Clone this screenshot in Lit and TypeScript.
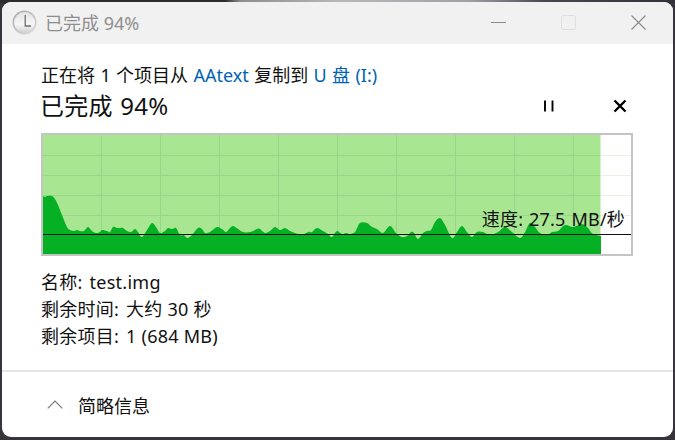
import { LitElement, html, css, svg } from 'lit';
import { customElement } from 'lit/decorators.js';

// speed curve, sampled from left to right in page coordinates
const SPEED: [number, number][] = [
  [43, 196], [45, 197], [47, 196], [52, 196], [55, 199], [58, 205], [62, 215], [67, 227], [70, 230], [74, 231],
  [77, 230], [80, 231], [84, 231], [88, 227], [92, 231], [96, 233], [100, 232], [102, 230], [107, 231], [110, 232],
  [113, 227], [117, 228], [120, 228], [123, 228], [127, 231], [131, 232], [135, 229], [138, 232], [142, 237], [147, 230],
  [152, 223], [156, 227], [160, 233], [165, 231], [168, 228], [172, 229], [176, 228], [180, 235], [184, 235], [187, 238],
  [192, 235], [198, 228], [202, 229], [205, 233], [210, 232], [217, 227], [222, 229], [226, 232], [229, 229], [233, 226],
  [238, 229], [243, 232], [250, 232], [257, 229], [260, 229], [265, 233], [270, 231], [275, 227], [280, 230], [285, 228],
  [290, 231], [295, 233], [302, 235], [308, 232], [312, 232], [317, 228], [323, 231], [328, 234], [332, 237], [337, 231],
  [342, 234], [346, 233], [350, 234], [355, 232], [360, 223], [367, 223], [372, 227], [377, 229], [383, 233], [390, 226],
  [396, 233], [402, 237], [407, 236], [411, 232], [414, 233], [418, 239], [423, 233], [427, 231], [431, 230], [435, 222],
  [440, 218], [445, 225], [452, 238], [457, 232], [462, 226], [467, 232], [472, 237], [477, 232], [483, 232], [490, 235],
  [498, 232], [505, 227], [512, 232], [520, 238], [525, 232], [530, 223], [535, 227], [540, 233], [547, 235], [552, 232],
  [558, 231], [565, 225], [573, 227], [582, 224], [588, 228], [593, 234], [601, 236],
];

const GRID_X = [101, 160, 219, 278, 337, 396, 455, 514, 573];
const GRID_Y = [155, 175, 195, 215];

// Catmull-Rom through the samples, so the peaks keep their height
function speedPath() {
  let d = `M43 255L${SPEED[0][0]} ${SPEED[0][1]}`;
  for (let i = 0; i < SPEED.length - 1; i++) {
    const p0 = SPEED[Math.max(i - 1, 0)];
    const p1 = SPEED[i];
    const p2 = SPEED[i + 1];
    const p3 = SPEED[Math.min(i + 2, SPEED.length - 1)];
    const c1x = p1[0] + (p2[0] - p0[0]) / 6;
    const c1y = p1[1] + (p2[1] - p0[1]) / 6;
    const c2x = p2[0] - (p3[0] - p1[0]) / 6;
    const c2y = p2[1] - (p3[1] - p1[1]) / 6;
    d += `C${c1x.toFixed(1)} ${c1y.toFixed(1)} ${c2x.toFixed(1)} ${c2y.toFixed(1)} ${p2[0]} ${p2[1]}`;
  }
  return `${d}L601 255Z`;
}

@customElement('app-root')
export class AppRoot extends LitElement {
  static styles = css`
    :host {
      display: block;
      width: 675px;
      height: 440px;
      padding: 2px 2px 3px 2px;
      box-sizing: border-box;
      overflow: hidden;
      background:
        linear-gradient(90deg, #2c2c2e 0, #2c2c2e 225px, #8f8b90 240px, #b9b6bb 340px, #a29ea6 470px, #4a4650 545px, #33303a 675px) top / 100% 3px no-repeat,
        #37343c;
      font-family: 'Noto Sans', 'Noto Sans CJK SC', sans-serif;
      color: #111;
    }

    .window {
      height: 100%;
      display: flex;
      flex-direction: column;
      background: #fff;
      border-radius: 9px;
      overflow: hidden;
    }

    .titlebar {
      height: 42px;
      flex-shrink: 0;
      display: flex;
      align-items: center;
      background: #f1f1f1;
      padding: 0 0 2px 10px;
      box-sizing: border-box;
      color: #8e8e8e;
      font-size: 18px;
    }

    .clock {
      width: 25px;
      height: 25px;
      margin-right: 8px;
    }

    .controls {
      margin-left: auto;
      display: flex;
      align-items: center;
      gap: 55px;
      padding-right: 27px;
    }

    .controls svg {
      display: block;
      width: 15px;
      height: 15px;
    }

    .body {
      flex: 1;
      padding: 17px 40px 0 39px;
    }

    .from {
      font-size: 18px;
      line-height: 28px;
      white-space: pre;
      word-spacing: 0.7px;
    }

    .from a {
      color: #0063b1;
    }

    .progress {
      display: flex;
      align-items: center;
      height: 34px;
      font-size: 24px;
    }

    .progress-text {
      margin: 0 0 4px -1px;
      word-spacing: 1px;
      letter-spacing: 0.25px;
    }

    .actions {
      margin-left: auto;
      display: flex;
      gap: 57px;
      margin-right: 6px;
    }

    .actions svg {
      display: block;
      width: 14px;
      height: 14px;
    }

    .chart {
      position: relative;
      width: 592px;
      height: 123px;
      margin-top: 10px;
      border: 2px solid #c4c4c4;
      box-sizing: border-box;
    }

    .chart svg {
      display: block;
      width: 588px;
      height: 119px;
    }

    .speed {
      position: absolute;
      right: 6px;
      top: 71px;
      font-size: 18px;
      line-height: 26px;
      white-space: pre;
      word-spacing: 1px;
      letter-spacing: 0.2px;
    }

    .details {
      margin-top: 13px;
      font-size: 18px;
      line-height: 27px;
      letter-spacing: 0.25px;
    }

    .details div {
      display: flex;
      gap: 7px;
    }

    .footer {
      height: 65px;
      flex-shrink: 0;
      display: flex;
      align-items: center;
      border-top: 2px solid #e6e6e6;
      padding-left: 45px;
      gap: 15px;
      font-size: 18px;
    }

    .footer svg {
      display: block;
      width: 16px;
      height: 9px;
    }
  `;

  renderClock() {
    return html`<svg class="clock" viewBox="0 0 25 25">
      <defs>
        <linearGradient id="rim" x1="0" y1="0" x2="0.7" y2="1">
          <stop offset="0" stop-color="#a8a8a8" />
          <stop offset="1" stop-color="#d8d8d8" />
        </linearGradient>
        <linearGradient id="face" x1="0" y1="0" x2="0" y2="1">
          <stop offset="0" stop-color="#e4e4e4" />
          <stop offset="0.6" stop-color="#f7f7f7" />
          <stop offset="1" stop-color="#cfcfcf" />
        </linearGradient>
      </defs>
      <circle cx="12.5" cy="12.5" r="12" fill="url(#rim)" />
      <circle cx="12.5" cy="12.5" r="10.4" fill="url(#face)" />
      <path d="M13.2 5V16H19" fill="none" stroke="#6e6e6e" stroke-width="1.3" />
    </svg>`;
  }

  renderChart() {
    return html`<svg viewBox="43 135 588 119" shape-rendering="geometricPrecision">
      <rect x="43" y="135" width="557.5" height="119" fill="#a9e691" />
      ${GRID_Y.map(y => svg`
        <line x1="43" x2="600.5" y1=${y + 0.5} y2=${y + 0.5} stroke="#97d68a" />
        <line x1="600.5" x2="631" y1=${y + 0.5} y2=${y + 0.5} stroke="#e6f2e4" />
      `)}
      ${GRID_X.map(x => svg`<line x1=${x + 0.5} x2=${x + 0.5} y1="135" y2="254" stroke="#97d68a" />`)}
      <path d=${speedPath()} fill="#06b025" />
      <line x1="43" x2="631" y1="234.5" y2="234.5" stroke="#111" />
    </svg>`;
  }

  render() {
    return html`
      <div class="window">
        <div class="titlebar">
          ${this.renderClock()}
          <span>已完成 94%</span>
          <div class="controls">
            <svg viewBox="0 0 15 15"><path d="M0 7.5H15" stroke="#8a8a8a" /></svg>
            <svg viewBox="0 0 15 15"><rect x="0.5" y="0.5" width="14" height="14" rx="2" fill="none" stroke="#dedede" /></svg>
            <svg viewBox="0 0 15 15"><path d="M0.5 0.5L14.5 14.5M14.5 0.5L0.5 14.5" stroke="#8a8a8a" stroke-width="1.1" /></svg>
          </div>
        </div>
        <div class="body">
          <div class="from">正在将 1 个项目从 <a>AAtext</a> 复制到 <a>U 盘 (I:)</a></div>
          <div class="progress">
            <span class="progress-text">已完成 94%</span>
            <div class="actions">
              <svg viewBox="0 0 14 14"><path d="M3 1.5V12.5M10.5 1.5V12.5" stroke="#000" stroke-width="1.9" /></svg>
              <svg viewBox="0 0 14 14"><path d="M1.5 1.5L12.5 12.5M12.5 1.5L1.5 12.5" stroke="#000" stroke-width="2.4" /></svg>
            </div>
          </div>
          <div class="chart">
            ${this.renderChart()}
            <span class="speed">速度: 27.5 MB/秒</span>
          </div>
          <div class="details">
            <div><span>名称:</span><span>test.img</span></div>
            <div><span>剩余时间:</span><span>大约 30 秒</span></div>
            <div><span>剩余项目:</span><span>1 (684 MB)</span></div>
          </div>
        </div>
        <div class="footer">
          <svg viewBox="0 0 16 9"><path d="M0.7 8.3L8 1L15.3 8.3" fill="none" stroke="#777" stroke-width="1.2" /></svg>
          <span>简略信息</span>
        </div>
      </div>
    `;
  }
}
